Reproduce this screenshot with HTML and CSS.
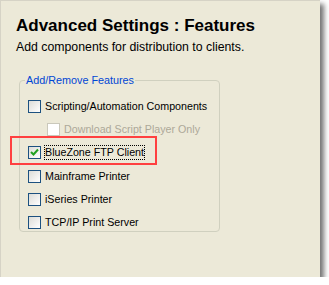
FILE: index.html
```html
<!doctype html>
<html lang="en">
<head>
    <meta charset="UTF-8">
    <title>Advanced Settings : Features</title>
    <link rel="stylesheet" href="styles.css">
</head>
<body>
    <div class="panel">
        <h1>Advanced Settings : Features</h1>
        <p class="subtitle">Add components for distribution to clients.</p>

        <fieldset class="group">
            <legend>Add/Remove Features</legend>

            <div class="option">
                <span class="box"></span>
                <span class="label">Scripting/Automation Components</span>
            </div>
            <div class="option sub disabled">
                <span class="box"></span>
                <span class="label">Download Script Player Only</span>
            </div>
            <div class="option highlight">
                <span class="box checked">
                    <svg width="9" height="9" viewBox="0 0 9 9"><path d="M1 4 L3.5 6.5 L8 1.5" fill="none" stroke="#21a121" stroke-width="2"/></svg>
                </span>
                <span class="label focus">BlueZone FTP Client</span>
            </div>
            <div class="option">
                <span class="box"></span>
                <span class="label">Mainframe Printer</span>
            </div>
            <div class="option">
                <span class="box"></span>
                <span class="label">iSeries Printer</span>
            </div>
            <div class="option">
                <span class="box"></span>
                <span class="label">TCP/IP Print Server</span>
            </div>
        </fieldset>
    </div>
</body>
</html>
```

FILE: styles.css
```css
body {
    margin: 0;
    background-color: #ffffff;
    font-family: 'Liberation Sans', Arial, sans-serif;
}
.panel {
    width: 320px;
    height: 277px;
    box-sizing: border-box;
    padding: 0 0 0 15px;
    background-color: #ece9d8;
    border-left: 1px solid #d6d3c6;
    border-top: 1px solid #d6d3c6;
    box-shadow: 4px 4px 5px rgba(0,0,0,0.55);
}
h1 {
    margin: 0;
    padding-top: 15px;
    font-size: 17px;
    line-height: 20px;
    font-weight: bold;
    color: #000;
}
.subtitle {
    margin: 3px 0 0 0;
    font-size: 12.3px;
    line-height: 16px;
    color: #000;
}
.group {
    margin: 19px 0 0 3px;
    width: 201px;
    height: 158px;
    box-sizing: border-box;
    border: 1px solid #d0d0bf;
    border-radius: 4px;
    padding: 13px 0 0 8px;
}
.group legend {
    color: #0046d5;
    padding: 0 1px;
    margin-left: -3px;
    font-size: 10.8px;
    line-height: 13px;
}
.option {
    display: flex;
    align-items: center;
    gap: 4px;
    height: 13px;
    margin-bottom: 10.2px;
    color: #000;
    white-space: nowrap;
    position: relative;
}
.option.sub {
    margin-left: 19px;
}
.option.disabled {
    color: #aca899;
}
.box {
    width: 13px;
    height: 13px;
    flex-shrink: 0;
    box-sizing: border-box;
    border: 1px solid #1c5180;
    background: linear-gradient(135deg, #dcdcd7, #ffffff);
    display: flex;
    align-items: center;
    justify-content: center;
}
.disabled .box {
    border-color: #cac8bb;
    background: #ffffff;
}
.label {
    font-size: 10.7px;
    line-height: 13px;
}
.focus {
    outline: 1px dotted #000;
}
.highlight::before {
    content: '';
    position: absolute;
    left: -18px;
    top: -10px;
    width: 147px;
    height: 29px;
    box-sizing: border-box;
    border: 2px solid #ff4040;
}
```
